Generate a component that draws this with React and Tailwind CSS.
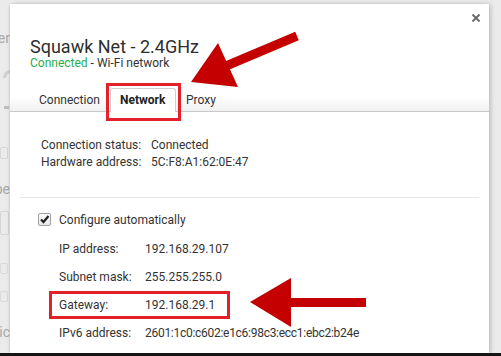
import React from 'react';

const Row = ({ label, value, labelWidth = 'w-[110px]', rowClass = 'leading-[17px]', valueClass = '' }) => (
  <div className={`flex ${rowClass}`}>
    <span className={`${labelWidth} shrink-0`}>{label}</span>
    <span className={valueClass}>{value}</span>
  </div>
);

const Annotations = () => (
  <>
    {/* red highlight boxes */}
    <div className="absolute left-[106px] top-[83px] w-[75px] h-[38px] border-[3px] border-[#e3212b]" />
    <div className="absolute left-[49px] top-[291px] w-[181px] h-[28px] border-[3px] border-[#e3212b]" />
    {/* arrows */}
    <svg className="absolute left-0 top-0" width="501" height="356" viewBox="0 0 501 356">
      <line x1="297" y1="36" x2="226" y2="66" stroke="#c40000" strokeWidth="9" />
      <polygon points="218,43 191,82 238,87" fill="#c40000" />
      <rect x="288" y="298" width="78" height="9" fill="#c40000" />
      <polygon points="291,278 250,302 291,327" fill="#c40000" />
    </svg>
  </>
);

const BackgroundStrip = () => (
  <div className="flex flex-col w-[10px] h-full text-[#a9a9a9] text-[14px]">
    <div className="flex justify-end whitespace-nowrap mt-[30px] leading-[16px]">Inter</div>
    <div className="ml-[3px] mt-[24px] w-[8px] h-[8px] rounded-tl-full border-t-[3px] border-l-[3px] border-[#d0d0d0]" />
    <div className="ml-[4px] mt-[28px] w-[5px] h-[3px] bg-[#bdbdbd]" />
    <div className="mt-[38px] w-[8px] h-[12px] border border-[#d6d6d6] rounded-[2px]" />
    <div className="flex justify-end whitespace-nowrap mt-[22px] leading-[16px]">Type</div>
    <div className="mt-[14px] w-[9px] h-[24px] border border-[#d6d6d6] rounded-[2px]" />
    <div className="mt-[28px] w-[8px] h-[11px] border border-[#dadada] rounded-[2px]" />
    <div className="mt-[17px] w-[8px] h-[11px] border border-[#dadada] rounded-[2px]" />
    <div className="flex justify-end whitespace-nowrap mt-[22px] leading-[16px]">Metric</div>
  </div>
);

export default function App() {
  return (
    <div className="relative w-[501px] h-[356px] overflow-hidden bg-[#ebebeb] font-['Roboto',sans-serif] text-[12px] text-[#333]">
      <BackgroundStrip />

      {/* dialog */}
      <div className="absolute left-[10px] top-[4px] w-[479px] h-[349px] bg-white rounded-t-[3px] shadow-[2px_0_4px_rgba(0,0,0,0.18),-1px_0_3px_rgba(0,0,0,0.1)] flex flex-col">
        <div className="relative h-[108px] border-b border-[#c8c8c8] bg-[linear-gradient(to_bottom,#ffffff_86%,#f1f1f1)] flex flex-col pl-[20px] pt-[33px]">
          <svg className="absolute right-[9px] top-[10px]" width="8" height="8" viewBox="0 0 8 8">
            <path d="M0.5 0.5 L7.5 7.5 M7.5 0.5 L0.5 7.5" stroke="#6b6b6b" strokeWidth="2" />
          </svg>
          <div className="text-[18px] leading-[20px] text-[#2e2e2e]">Squawk Net - 2.4GHz</div>
          <div className="leading-[12px]">
            <span className="text-[#1fae4e]">Connected</span> - Wi-Fi network
          </div>
          <div className="mt-auto -mb-px ml-[-1px] flex items-end h-[24px]">
            <div className="w-[81px] h-[24px] pl-[10px] pt-[4px] leading-[16px]">Connection</div>
            <div className="w-[66px] h-[24px] pl-[9px] pt-[3px] leading-[16px] font-bold bg-white border border-b-0 border-[#cfcfcf] rounded-t-[3px] text-[#222]">Network</div>
            <div className="h-[24px] pl-[10px] pt-[4px] leading-[16px]">Proxy</div>
          </div>
        </div>

        <div className="pl-[31px] pt-[25px]">
          <Row label="Connection status:" value="Connected" />
          <Row label="Hardware address:" value="5C:F8:A1:62:0E:47" />
        </div>

        <div className="mx-[10px] mt-[26px] h-px bg-[#e6e6e6]" />

        <div className="pl-[28px] mt-[13px] flex items-center h-[17px]">
          <div className="w-[13px] h-[13px] mr-[8px] border border-[#a0a0a0] rounded-[2px] bg-[linear-gradient(to_bottom,#ffffff,#e8e8e8)] flex items-center justify-center">
            <svg width="11" height="11" viewBox="0 0 11 11">
              <path d="M2 5.5 L4.5 8 L9.5 2" stroke="#222" strokeWidth="2.2" fill="none" />
            </svg>
          </div>
          <span>Configure automatically</span>
        </div>

        <div className="pl-[49px] mt-[7px]">
          <Row label="IP address:" value="192.168.29.107" labelWidth="w-[86px]" rowClass="leading-[28px]" />
          <Row label="Subnet mask:" value="255.255.255.0" labelWidth="w-[86px]" rowClass="leading-[28px]" />
          <Row label="Gateway:" value="192.168.29.1" labelWidth="w-[86px]" rowClass="leading-[28px]" />
          <Row label="IPv6 address:" value="2601:1c0:c602:e1c6:98c3:ecc1:ebc2:b24e" labelWidth="w-[86px]" rowClass="leading-[28px]" valueClass="tracking-[-0.28px]" />
        </div>
      </div>

      <div className="absolute left-0 bottom-0 w-full h-[3px] bg-[#151515]" />

      <Annotations />
    </div>
  );
}
